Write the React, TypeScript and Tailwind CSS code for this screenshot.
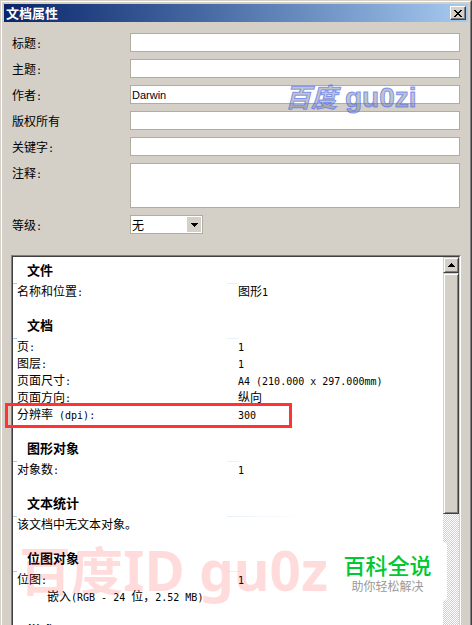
import React from 'react';

interface InfoRow {
  label: string;
  value?: string;
  indent?: boolean;
}

interface InfoSection {
  title: string;
  rows: InfoRow[];
}

const fields = [
  { id: 'title', label: '标题:', value: '' },
  { id: 'subject', label: '主题:', value: '' },
  { id: 'author', label: '作者:', value: 'Darwin' },
  { id: 'copyright', label: '版权所有', value: '' },
  { id: 'keywords', label: '关键字:', value: '' },
];

const sections: InfoSection[] = [
  { title: '文件', rows: [{ label: '名称和位置:', value: '图形1' }] },
  {
    title: '文档',
    rows: [
      { label: '页:', value: '1' },
      { label: '图层:', value: '1' },
      { label: '页面尺寸:', value: 'A4 (210.000 x 297.000mm)' },
      { label: '页面方向:', value: '纵向' },
      { label: '分辨率 (dpi):', value: '300' },
    ],
  },
  { title: '图形对象', rows: [{ label: '对象数:', value: '1' }] },
  { title: '文本统计', rows: [{ label: '该文档中无文本对象。' }] },
  {
    title: '位图对象',
    rows: [
      { label: '位图:', value: '1' },
      { label: '嵌入(RGB - 24 位\uff0c2.52 MB)', indent: true },
    ],
  },
  { title: '样式', rows: [] },
];

// Latin runs are set at half the width of a Chinese character
const MixedText: React.FC<{ text: string }> = ({ text }) => (
  <>
    {text.split(/([\x20-\x7e]+)/).map((part, i) =>
      i % 2 === 1 ? (
        <span key={i} className="font-['DejaVu_Sans_Mono',monospace] text-[10px] leading-none">{part}</span>
      ) : (
        part
      )
    )}
  </>
);

const SectionLine: React.FC<{ hasValue: boolean }> = ({ hasValue }) => (
  <div className="-mb-0.5 flex h-px bg-[linear-gradient(to_right,#a6caf0,#ffffff_292px)]">
    <div className="ml-1 w-[210px] bg-white" />
    {hasValue && <div className="ml-3 flex-1 bg-white" />}
  </div>
);

const Section: React.FC<{ section: InfoSection }> = ({ section }) => (
  <section className="mb-[17px]">
    <h2 className="mb-[5px] h-[17px] pl-3.5 text-[13px] font-bold leading-[17px]">{section.title}</h2>
    <SectionLine hasValue={section.rows.some((row) => row.value)} />
    {section.rows.map((row) => (
      <div key={row.label} className="flex h-[17px] whitespace-pre pl-1 text-xs leading-[17px]">
        <span className={row.indent ? 'pl-[30px]' : 'w-[221px] shrink-0'}>
          <MixedText text={row.label} />
        </span>
        {row.value && (
          <span>
            <MixedText text={row.value} />
          </span>
        )}
      </div>
    ))}
  </section>
);

const TitleBar: React.FC = () => (
  <header className="flex h-[18px] items-center justify-between bg-linear-to-r from-[#0a246a] to-[#a6caf0] px-0.5">
    <h1 className="text-[13px] font-bold leading-[18px] text-white">文档属性</h1>
    <button
      type="button"
      aria-label="关闭"
      className="flex h-3.5 w-4 items-center justify-center border border-b-[#404040] border-l-white border-r-[#404040] border-t-white bg-[#d4d0c8] shadow-[inset_-1px_-1px_0_#808080]"
    >
      <svg width="8" height="7" viewBox="0 0 8 7" shapeRendering="crispEdges" fill="#000">
        <path d="M0 0h2v1h1v1h2V1h1V0h2v1H7v1H6v1H5v1h1v1h1v1h1v1H6V6H5V5H3v1H2v1H0V6h1V5h1V4h1V3H2V2H1V1H0z" />
      </svg>
    </button>
  </header>
);

const ScrollBar: React.FC = () => (
  <div className="flex w-4 shrink-0 flex-col bg-[repeating-conic-gradient(#d4d0c8_0_25%,#ffffff_0_50%)] bg-[length:2px_2px]">
    <button
      type="button"
      aria-label="向上滚动"
      className="flex h-4 items-center justify-center border border-b-[#404040] border-l-[#d4d0c8] border-r-[#404040] border-t-[#d4d0c8] bg-[#d4d0c8] shadow-[inset_1px_1px_0_#ffffff,inset_-1px_-1px_0_#808080]"
    >
      <svg width="7" height="4" viewBox="0 0 7 4" shapeRendering="crispEdges">
        <path d="M3 0h1v1h1v1h1v1h1v1H0V3h1V2h1V1h1z" />
      </svg>
    </button>
    <div className="h-[241px] border border-b-[#404040] border-l-[#d4d0c8] border-r-[#404040] border-t-[#d4d0c8] bg-[#d4d0c8] shadow-[inset_1px_1px_0_#ffffff,inset_-1px_-1px_0_#808080]" />
  </div>
);

export default function App() {
  return (
    <main className="relative flex h-screen flex-col overflow-hidden border-l border-r border-t border-l-[#d4d0c8] border-r-[#404040] border-t-[#d4d0c8] bg-[#d4d0c8] font-['Noto_Sans_CJK_SC',sans-serif] text-black">
      <div className="flex min-h-0 flex-1 flex-col border-l border-r border-t border-l-white border-r-[#808080] border-t-white px-0.5 pt-0.5">
        <TitleBar />

        <form className="flex flex-col gap-[7px] px-2 pt-[11px] text-xs">
          {fields.map((field) => (
            <div key={field.id} className="flex h-[19px] items-center">
              <label htmlFor={field.id} className="w-[118px] shrink-0 leading-[19px]">
                <MixedText text={field.label} />
              </label>
              <input
                id={field.id}
                type="text"
                defaultValue={field.value}
                className="h-[19px] min-w-0 flex-1 border border-[#b0aca0] bg-white px-px font-['Liberation_Sans',sans-serif] text-[11px] text-[#000020] outline-none"
              />
            </div>
          ))}
          <div className="flex items-start">
            <label htmlFor="notes" className="h-[19px] w-[118px] shrink-0 leading-[19px]">
              <MixedText text="注释:" />
            </label>
            <textarea id="notes" className="h-[45px] min-w-0 flex-1 resize-none border border-[#b0aca0] bg-white outline-none" />
          </div>
          <div className="flex h-[19px] items-center">
            <label htmlFor="rating" className="w-[118px] shrink-0 leading-[19px]">
              <MixedText text="等级:" />
            </label>
            <div className="relative">
              <select id="rating" className="block h-[19px] w-[73px] appearance-none border border-[#b0aca0] bg-white pl-px leading-[17px] outline-none">
                <option>无</option>
              </select>
              <span className="pointer-events-none absolute inset-y-0.5 right-0.5 flex w-3.5 items-center justify-center bg-[#d4d0c8]">
                <svg width="7" height="4" viewBox="0 0 7 4" shapeRendering="crispEdges">
                  <path d="M0 0h7v1H6v1H5v1H4v1H3V3H2V2H1V1H0z" />
                </svg>
              </span>
            </div>
          </div>
        </form>

        <div className="mx-[7px] mt-[21px] flex min-h-0 flex-1 border-l border-r border-t border-l-[#808080] border-r-white border-t-[#808080]">
          <div className="flex min-w-0 flex-1 overflow-hidden border-l border-r border-t border-l-[#404040] border-r-[#d4d0c8] border-t-[#404040] bg-white">
            <div className="min-w-0 flex-1 pt-1">
              {sections.map((section) => (
                <Section key={section.title} section={section} />
              ))}
            </div>
            <ScrollBar />
          </div>
        </div>
      </div>

      <div className="pointer-events-none absolute left-1 top-[402px] h-[25px] w-[287px] border-[3px] border-[#ff3333]" />

      <div className="pointer-events-none absolute left-[284px] top-[79px] flex items-baseline gap-2 whitespace-nowrap font-bold leading-8 text-[#80808078] [-webkit-text-stroke:1px_#4d70ffb0]">
        <span className="text-[26px] italic">百度</span>
        <span className="font-['Liberation_Sans',sans-serif] text-[28px]">gu0zi</span>
      </div>

      <div className="pointer-events-none absolute left-[18px] top-[536px] whitespace-nowrap text-[52px] font-bold leading-[64px] text-[#ff000024]">
        百度<span className="font-['Noto_Sans',sans-serif] text-[55px]">ID gu0z</span>
      </div>

      <div className="pointer-events-none absolute right-6 top-[541px] flex h-[59px] w-[113px] flex-col items-center justify-center rounded-sm bg-white pr-1.5">
        <span className="text-[22px] font-medium leading-7 text-[#00c832]">百科全说</span>
        <span className="text-xs leading-4 text-[#999999]">助你轻松解决</span>
      </div>
    </main>
  );
}
